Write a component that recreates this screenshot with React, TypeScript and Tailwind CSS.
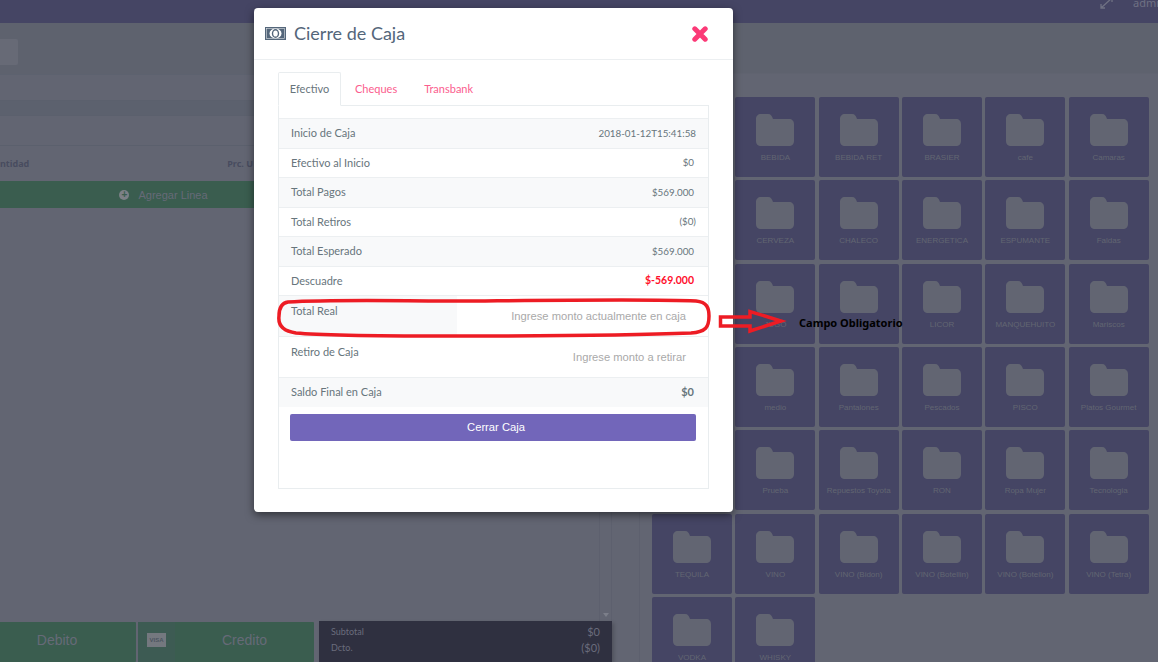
const S = "font-['Lato',sans-serif]";

const tiles: string[][] = [
  ["", "BEBIDA", "BEBIDA RET", "BRASIER", "cafe", "Camaras"],
  ["", "CERVEZA", "CHALECO", "ENERGETICA", "ESPUMANTE", "Faldas"],
  ["", "JUGO", "", "LICOR", "MANQUEHUITO", "Mariscos"],
  ["", "medio", "Pantalones", "Pescados", "PISCO", "Platos Gourmet"],
  ["", "Prueba", "Repuestos Toyota", "RON", "Ropa Mujer", "Tecnologia"],
  ["TEQUILA", "VINO", "VINO (Bidon)", "VINO (Botellin)", "VINO (Botellon)", "VINO (Tetra)"],
  ["VODKA", "WHISKY"],
];

function Folder() {
  return (
    <svg width="38" height="32" viewBox="0 0 38 32" className="block">
      <path d="M5 0h7c3 0 4 2 5 5h16c3 0 5 2 5 5v17c0 3-2 5-5 5H5c-3 0-5-2-5-5V5c0-3 2-5 5-5z" fill="#626572" />
    </svg>
  );
}

function Tile({ label }: { label: string }) {
  return (
    <div className="h-[80px] w-[80px] rounded-[2px] bg-[#454564] flex flex-col items-center pt-[17px]">
      <Folder />
      <div className="mt-[7px] whitespace-nowrap text-[8px] leading-[10px] text-[#626572] font-['Liberation_Sans',sans-serif]">{label}</div>
    </div>
  );
}

const rows: [string, string, boolean][] = [
  ["Inicio de Caja", "2018-01-12T15:41:58", false],
  ["Efectivo al Inicio", "$0", true],
  ["Total Pagos", "$569.000", true],
  ["Total Retiros", "($0)", false],
  ["Total Esperado", "$569.000", true],
];

function Row({ label, value, odd, inset }: { label: string; value: string; odd: boolean; inset: boolean }) {
  return (
    <div className={`h-[29.5px] border-t border-[#eceff1] px-[12px] flex items-center justify-between text-[11px] text-[#67757c] ${odd ? "bg-[#f8f9fa]" : "bg-white"}`}>
      <span>{label}</span>
      <span className={`text-[9.8px] ${inset ? "mr-[2px]" : ""}`}>{value}</span>
    </div>
  );
}

export default function App() {
  return (
    <div className="relative h-[662px] w-[1158px] overflow-hidden bg-[#626572]">
      <div className="h-[23px] bg-[#454564] flex items-start justify-end gap-[19px] overflow-hidden">
        <svg width="14" height="12" viewBox="0 0 14 12" className="-mt-[3px]" fill="none" stroke="#6f7183" strokeWidth="1.3"><path d="M1 11l11-10M8 1h4v4M1 7v4h4" /></svg>
        <span className="font-['Noto_Sans',sans-serif] text-[11px] leading-[8px] text-[#6f7183] w-[25px] overflow-hidden -mt-[1px]">admin</span>
      </div>
      <div className="flex h-[639px]">
        <div className="w-[612px] flex flex-col shrink-0">
          <div className="h-[52px] pt-[16px] border-b border-[#5d626f] bg-[#5e626e]">
            <div className="h-[26px] w-[18px] rounded-r-[2px] bg-[#676a76]" />
          </div>
          <div className="h-[26px] bg-[#626572] border-b border-[#5b606d]" />
          <div className="h-[14px] bg-[#5c616e]" />
          <div className="h-[31px] bg-[#626572] border-y border-[#5b606d]" />
          <div className="h-[35px] flex items-center text-[9px] font-bold text-[#484c5f] font-['Noto_Sans',sans-serif]">
            <span>ntidad</span>
            <span className="ml-[198px]">Prc. U</span>
          </div>
          <div className="h-[27px] pr-[285px] pt-px bg-[#3a5d4f] flex items-center justify-center gap-[9px] text-[11px] text-[#666a78] font-['Liberation_Sans',sans-serif]">
            <span className="w-[10px] h-[10px] rounded-full bg-[#7c8087] flex items-center justify-center text-[#3a5d4f] text-[10px] font-bold leading-none">+</span>
            <span>Agregar Linea</span>
          </div>
          <div className="flex-1 flex justify-end border-r border-[#5d606e]">
            <div className="w-[12px] border-l border-[#5d606e] flex flex-col justify-end items-center pb-[4px]">
              <div className="w-0 h-0 border-x-[3px] border-x-transparent border-t-[4px] border-t-[#7c7f8a]" />
            </div>
          </div>
          <div className="h-[41px] flex items-stretch shrink-0 text-[14px] text-[#666a78] font-['Liberation_Sans',sans-serif]">
            <div className="w-[136px] mt-[1px] pr-[22px] pb-[4px] rounded-r-[1px] bg-[#3a5d4f] flex items-center justify-center">Debito</div>
            <div className="w-[176px] ml-[2px] mt-[1px] rounded-[1px] bg-[#3a5d4f] flex items-center">
              <div className="w-[37px] h-full pb-[4px] bg-[#3d5b53] flex items-center justify-center">
                <div className="w-[19px] h-[14px] bg-[#74787f] text-[6px] font-bold leading-[14px] text-center text-[#4c5560]">VISA</div>
              </div>
              <span className="flex-1 pb-[4px] text-center">Credito</span>
            </div>
            <div className={`w-[293px] ml-[5px] bg-[#2f3040] px-[12px] pt-[3px] text-[9px] text-[#6a6c7c] ${S} shadow-[2px_2px_4px_rgba(0,0,0,0.2)]`}>
              <div className="flex justify-between h-[16px] items-center"><span>Subtotal</span><span className="text-[11px]">$0</span></div>
              <div className="flex justify-between h-[16px] items-center"><span>Dcto.</span><span className="text-[11px]">($0)</span></div>
            </div>
          </div>
        </div>
        <div className="flex-1 border-l border-[#5d606e] ml-[27px]">
          <div className="pl-[12px] pt-[74px] bg-[linear-gradient(#5e626e_0,#5e626e_50px,#626572_51px)]">
            <div className="flex flex-col gap-[3.33px]">
              {tiles.map((r, i) => (
                <div key={i} className="flex gap-[3.33px]">
                  {r.map((t, j) => <Tile key={j} label={t} />)}
                </div>
              ))}
            </div>
          </div>
        </div>
      </div>

      <div className={`absolute left-[254px] top-[8px] w-[479px] h-[504px] rounded-[4px] bg-white shadow-[0_3px_9px_rgba(0,0,0,0.5)] ${S}`}>
        <div className="h-[52px] border-b border-[#eceff1] flex items-center justify-between pl-[11px] pr-[25px]">
          <div className="flex items-center gap-[8px] text-[#54667a] text-[18px]">
            <svg width="21" height="13" viewBox="0 0 21 13">
              <rect width="21" height="13" fill="#54667a" />
              <ellipse cx="10.5" cy="6.5" rx="6" ry="5" fill="#fff" />
              <ellipse cx="10.5" cy="6.5" rx="3" ry="3.8" fill="none" stroke="#54667a" strokeWidth="1.4" />
              <rect x="1.5" y="1.5" width="18" height="10" fill="none" stroke="#dfe3e6" strokeWidth="0.6" />
            </svg>
            <span>Cierre de Caja</span>
          </div>
          <svg width="16" height="16" viewBox="0 0 16 16"><path d="M2.8 2.8l10.4 10.4M13.2 2.8l-10.4 10.4" stroke="#fb3a77" strokeWidth="5" strokeLinecap="round" /></svg>
        </div>
        <div className="pl-[24px] pr-[24px] pt-[12px]">
          <div className="flex h-[34px] text-[11px] relative z-10">
            <div className="w-[63px] h-[34px] bg-white border border-[#e9edef] border-b-white rounded-t-[2px] flex items-center justify-center text-[#67757c]">Efectivo</div>
            <div className="ml-[14px] flex items-center text-[#fb5d8e]">Cheques</div>
            <div className="ml-[27px] flex items-center text-[#fb5d8e]">Transbank</div>
          </div>
          <div className="-mt-px h-[384px] border border-[#e9edef] pt-[12px]">
            {rows.map((r, i) => <Row key={r[0]} label={r[0]} value={r[1]} inset={r[2]} odd={i % 2 === 0} />)}
            <div className="h-[29.5px] border-t border-[#eceff1] px-[12px] flex items-center justify-between text-[11px] text-[#67757c]">
              <span>Descuadre</span>
              <span className="mr-[2px] text-[10.5px] font-bold text-[#ff0f2b]">$-569.000</span>
            </div>
            <div className="h-[41px] border-t border-[#eceff1] flex text-[11px] text-[#67757c]">
              <div className="w-[178px] bg-[#f8f9fa] pl-[12px] pt-[7px]">Total Real</div>
              <div className="flex-1 pr-[22px] pt-[12px] text-right text-[11.2px] text-[#a9a9a9] font-['Liberation_Sans',sans-serif]">Ingrese monto actualmente en caja</div>
            </div>
            <div className="h-[41px] border-t border-[#eceff1] flex text-[11px] text-[#67757c]">
              <div className="w-[178px] pl-[12px] pt-[7px]">Retiro de Caja</div>
              <div className="flex-1 pr-[22px] pt-[12px] text-right text-[11.2px] text-[#a9a9a9] font-['Liberation_Sans',sans-serif]">Ingrese monto a retirar</div>
            </div>
            <div className="h-[30px] border-t border-[#eceff1] bg-[#f8f9fa] px-[12px] flex items-center justify-between text-[11px] text-[#67757c]">
              <span>Saldo Final en Caja</span>
              <span className="mr-[2px] font-bold">$0</span>
            </div>
            <div className="ml-[11px] mr-[12px] mt-[7px] h-[27px] pl-[6px] rounded-[2px] bg-[#7266ba] flex items-center justify-center text-white text-[11.2px] font-['Liberation_Sans',sans-serif]">Cerrar Caja</div>
          </div>
        </div>
      </div>

      <svg className="absolute left-[276px] top-[296px]" width="520" height="44" viewBox="0 0 520 44" fill="none">
        <path d="M12 6C60 3 120 5 200 5C300 4 380 3 420 5C431 6 433 12 433 20C433 31 430 36 415 37C340 40 250 40 170 40C110 40 50 40 20 37C5 35 2 28 3 20C3 12 5 7 12 6Z" stroke="#ed1c24" strokeWidth="3.5" />
        <path d="M444.5 21H474V15.5L505 25L474 35V30H444.5Z" stroke="#ed1c24" strokeWidth="3.5" />
      </svg>
      <div className="absolute left-[799px] top-[316px] text-[11px] leading-[14px] font-bold text-black font-['Noto_Sans',sans-serif]">Campo Obligatorio</div>
    </div>
  );
}
